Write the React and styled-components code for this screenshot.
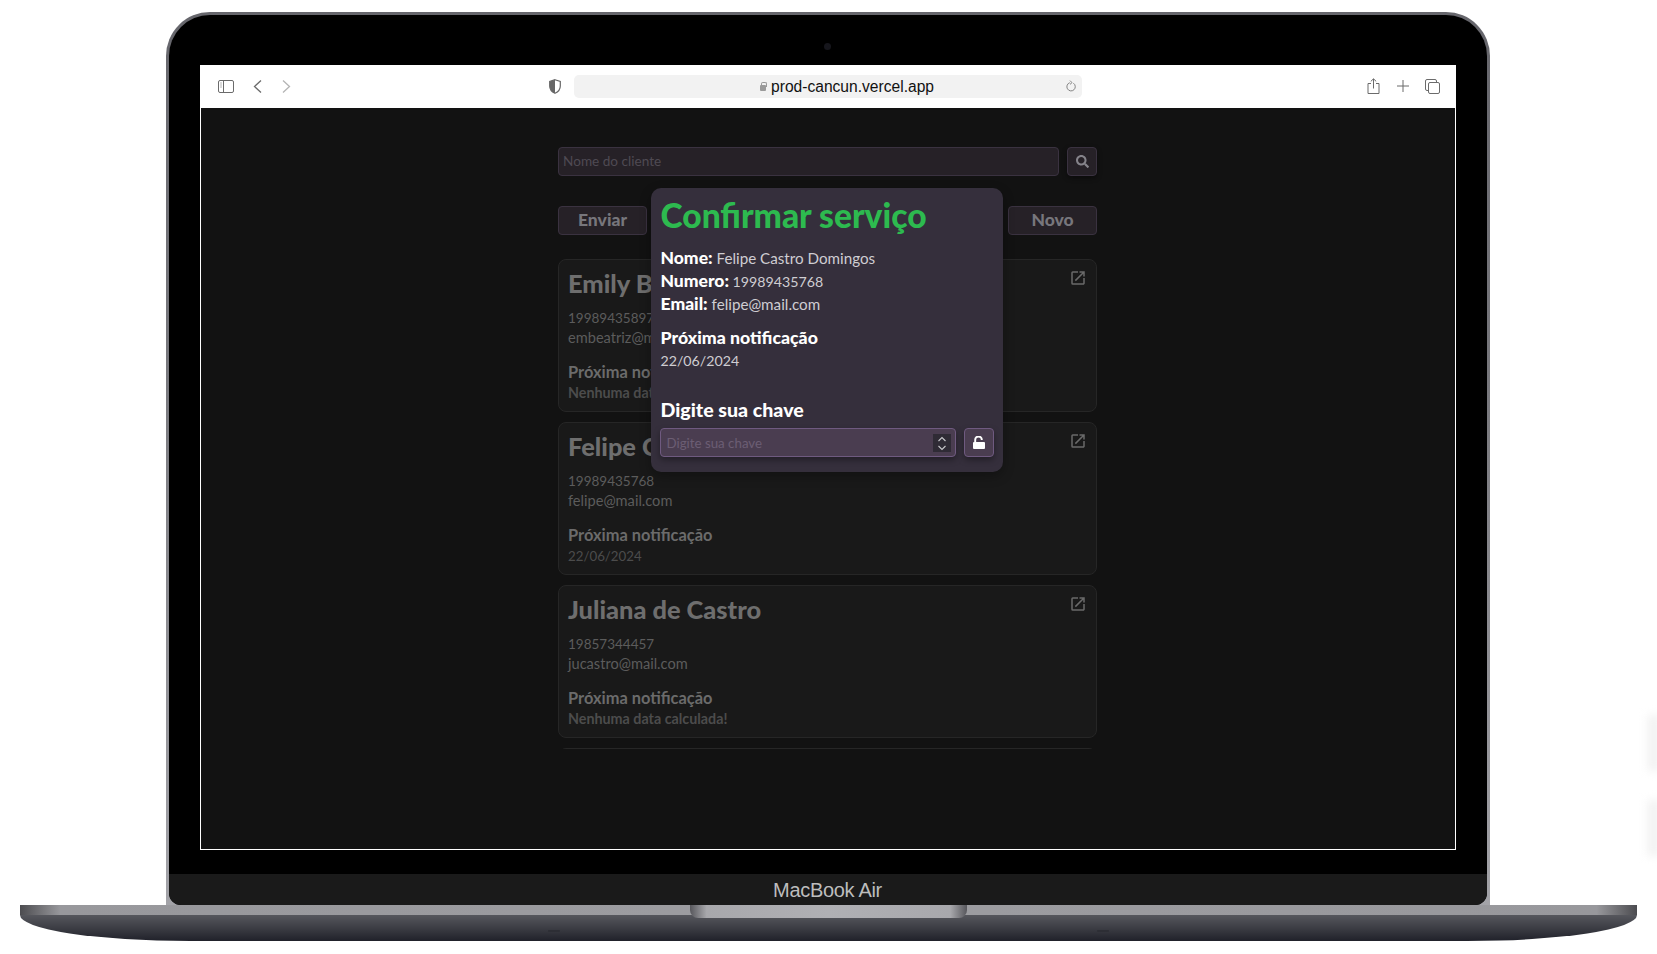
import React from "react"
import styled, { createGlobalStyle } from "styled-components"
import { FaSearch } from "react-icons/fa"
import { MdOpenInNew } from "react-icons/md"

const clients = [
  { name: "Emily Beatriz", phone: "19989435897", email: "embeatriz@mail.com", next: null },
  { name: "Felipe Castro Domingos", phone: "19989435768", email: "felipe@mail.com", next: "22/06/2024" },
  { name: "Juliana de Castro", phone: "19857344457", email: "jucastro@mail.com", next: null },
]

export default function App() {
  return (
    <Page>
      <GlobalStyle />
      <Lid>
        <Bezel>
          <Camera />
          <Screen>
            <Toolbar>
              <ToolbarLeft>
                <ToolIcon width="16" height="13" viewBox="0 0 16 13">
                  <rect x="0.5" y="0.5" width="15" height="12" rx="1.5" />
                  <path d="M5.5 0.5v12M2.5 3h1M2.5 5h1M2.5 7h1" />
                </ToolIcon>
                <ChevronGroup>
                  <ToolIcon width="9" height="13" viewBox="0 0 9 13">
                    <path d="M8 0.5 1.5 6.5 8 12.5" strokeWidth="1.3" />
                  </ToolIcon>
                  <ToolIcon faded width="9" height="13" viewBox="0 0 9 13">
                    <path d="M1 0.5 7.5 6.5 1 12.5" strokeWidth="1.3" />
                  </ToolIcon>
                </ChevronGroup>
                <ShieldWrap>
                  <svg width="12" height="15" viewBox="0 0 12 15">
                    <path d="M6 0.7 11.3 2.4V7c0 3.6-2.4 6-5.3 7.3C3.1 13 .7 10.6.7 7V2.4z" fill="none" stroke="#666" strokeWidth="1.2" />
                    <path d="M6 0.7V14.3C3.1 13 .7 10.6.7 7V2.4z" fill="#666" />
                  </svg>
                </ShieldWrap>
              </ToolbarLeft>
              <UrlBar>
                <UrlLock />
                <UrlText>prod-cancun.vercel.app</UrlText>
                <ReloadIcon width="11" height="13" viewBox="0 0 11 13">
                  <path d="M7.4 3.2a4.2 4.2 0 1 1-3.6-.5" fill="none" stroke="#777" strokeWidth="0.9" />
                  <path d="M4 0.6 6 2.6 4 4.4" fill="none" stroke="#777" strokeWidth="0.9" />
                </ReloadIcon>
              </UrlBar>
              <ToolbarRight>
                <ToolIcon width="13" height="16" viewBox="0 0 13 16">
                  <path d="M4 5.5H1v10h11v-10H9M6.5 10.5V1M3.8 3.4 6.5 .8l2.7 2.6" />
                </ToolIcon>
                <ToolIcon width="12" height="12" viewBox="0 0 12 12">
                  <path d="M6 0v12M0 6h12" />
                </ToolIcon>
                <ToolIcon width="15" height="15" viewBox="0 0 15 15">
                  <rect x="3.5" y="3.5" width="11" height="11" rx="1.5" />
                  <path d="M3.5 11.5H2A1.5 1.5 0 0 1 .5 10V2A1.5 1.5 0 0 1 2 .5h8A1.5 1.5 0 0 1 11.5 2v1.5" />
                </ToolIcon>
              </ToolbarRight>
            </Toolbar>
            <Content>
              <Column>
                <SearchRow>
                  <SearchInput placeholder="Nome do cliente" readOnly />
                  <SearchButton>
                    <FaSearch size={13} />
                  </SearchButton>
                </SearchRow>
                <Actions>
                  <ActionButton>Enviar</ActionButton>
                  <ActionButton>Novo</ActionButton>
                </Actions>
                <List>
                  {clients.map((c) => (
                    <Card key={c.name}>
                      <CardLink>
                        <MdOpenInNew size={18} />
                      </CardLink>
                      <CardName>{c.name}</CardName>
                      <CardPhone>{c.phone}</CardPhone>
                      <CardEmail>{c.email}</CardEmail>
                      <CardLabel>Próxima notificação</CardLabel>
                      <CardDate empty={!c.next}>{c.next || "Nenhuma data calculada!"}</CardDate>
                    </Card>
                  ))}
                  <Card />
                </List>
                <Modal>
                  <ModalTitle>Confirmar serviço</ModalTitle>
                  <InfoLine>
                    <strong>Nome:</strong> Felipe Castro Domingos
                  </InfoLine>
                  <InfoLine digits>
                    <strong>Numero:</strong> 19989435768
                  </InfoLine>
                  <InfoLine>
                    <strong>Email:</strong> felipe@mail.com
                  </InfoLine>
                  <ModalLabel>Próxima notificação</ModalLabel>
                  <InfoLine digits>22/06/2024</InfoLine>
                  <KeyLabel>Digite sua chave</KeyLabel>
                  <KeyRow>
                    <KeyField>
                      <KeyInput placeholder="Digite sua chave" readOnly />
                      <Spinner>
                        <svg width="10" height="15" viewBox="0 0 10 15">
                          <path d="M1.5 5 5 1.5 8.5 5M1.5 10 5 13.5 8.5 10" fill="none" stroke="#c8c8cc" strokeWidth="1.1" />
                        </svg>
                      </Spinner>
                    </KeyField>
                    <UnlockButton>
                      <svg width="12" height="13" viewBox="0 0 12 13">
                        <path d="M2.2 6.5V3.8a3.3 3.3 0 0 1 6.6 0v.2" fill="none" stroke="#fff" strokeWidth="1.9" />
                        <rect x="0" y="6" width="12" height="7" rx="1" fill="#fff" />
                      </svg>
                    </UnlockButton>
                  </KeyRow>
                </Modal>
              </Column>
            </Content>
          </Screen>
          <ModelStrip>MacBook Air</ModelStrip>
        </Bezel>
      </Lid>
      <Base>
        <BaseBand />
        <BaseBody>
          <Foot />
          <Foot />
        </BaseBody>
        <Notch />
      </Base>
      <EdgeShade />
      <EdgeShade second />
    </Page>
  )
}

const GlobalStyle = createGlobalStyle`
  html, body {
    margin: 0;
    background: #fff;
    overflow: hidden;
  }
  * {
    box-sizing: border-box;
  }
`
const Page = styled.div`
  position: relative;
  height: 954px;
  padding-top: 12px;
  display: flex;
  flex-direction: column;
  align-items: center;
  background: #fff;
  overflow: hidden;
  font-family: "Lato", "Noto Sans", sans-serif;
`
const Lid = styled.div`
  width: 1324px;
  height: 893px;
  margin-right: 2px;
  padding: 3px 3px 0;
  border-radius: 44px 44px 0 0;
  background: linear-gradient(#66666c, #77777c 40%, #a3a3a8);
  display: flex;
`
const Bezel = styled.div`
  position: relative;
  flex: 1;
  padding-top: 50px;
  border-radius: 41px 41px 12px 12px;
  background: #000;
  display: flex;
  flex-direction: column;
  align-items: center;
`
const Camera = styled.div`
  position: absolute;
  top: 28px;
  left: 655px;
  width: 7px;
  height: 7px;
  border-radius: 50%;
  background: #16161c;
`
const Screen = styled.div`
  width: 1256px;
  height: 785px;
  display: flex;
  flex-direction: column;
`
const Toolbar = styled.div`
  height: 43px;
  background: #fff;
  display: grid;
  grid-template-columns: 1fr 508px 1fr;
  align-items: center;
  padding-bottom: 1px;
`
const ToolbarLeft = styled.div`
  display: flex;
  align-items: center;
  padding: 0 13px 0 18px;
`
const ChevronGroup = styled.div`
  display: flex;
  gap: 20px;
  margin-left: 19px;
`
const ShieldWrap = styled.div`
  margin-left: auto;
  display: flex;
`
const ToolIcon = styled.svg`
  fill: none;
  stroke: ${(props) => (props.faded ? "#b4b4b4" : "#6b6b6b")};
  stroke-width: 1;
  flex: none;
`
const UrlBar = styled.div`
  position: relative;
  height: 23px;
  padding-left: 39px;
  border-radius: 5px;
  background: #f2f2f2;
  display: flex;
  align-items: center;
  justify-content: center;
  gap: 5px;
`
const UrlLock = styled.span`
  position: relative;
  width: 6px;
  height: 6px;
  margin-top: 3px;
  border-radius: 1px;
  background: #9a9a9a;
  &::before {
    content: "";
    position: absolute;
    left: 1px;
    top: -3px;
    width: 4px;
    height: 4px;
    border: 1px solid #9a9a9a;
    border-bottom: 0;
    border-radius: 2px 2px 0 0;
  }
`
const UrlText = styled.span`
  position: relative;
  top: 1px;
  font-family: "Liberation Sans", Arial, sans-serif;
  font-size: 15.6px;
  color: #111;
`
const ReloadIcon = styled.svg`
  position: absolute;
  right: 5px;
  top: 5px;
`
const ToolbarRight = styled.div`
  display: flex;
  align-items: center;
  justify-content: flex-end;
  gap: 16.5px;
  padding-right: 15.5px;
`
const Content = styled.div`
  flex: 1;
  background: #121212;
  border: 1px solid #fff;
  border-top: 0;
  display: flex;
  justify-content: center;
`
const Column = styled.div`
  position: relative;
  width: 539px;
  padding-top: 39px;
  display: flex;
  flex-direction: column;
`
const SearchRow = styled.div`
  display: flex;
  gap: 8px;
`
const SearchInput = styled.input`
  flex: 1;
  height: 29px;
  padding: 0 4px 2px;
  border: 1px solid #3a3240;
  border-radius: 4px;
  outline: none;
  background: #262127;
  font-family: inherit;
  font-size: 13.6px;
  &::placeholder {
    color: #4f4a53;
  }
`
const SearchButton = styled.div`
  width: 30px;
  height: 29px;
  border: 1px solid #3a3240;
  border-radius: 4px;
  background: #262127;
  color: #85838a;
  box-shadow: 0 2px 5px rgba(0, 0, 0, 0.4);
  display: flex;
  align-items: center;
  justify-content: center;
`
const Actions = styled.div`
  margin-top: 30px;
  display: flex;
  justify-content: space-between;
`
const ActionButton = styled.div`
  width: 89px;
  height: 29px;
  padding-bottom: 2px;
  border: 1px solid #3a3240;
  border-radius: 4px;
  background: #262127;
  color: #77767c;
  font-size: 17.5px;
  font-weight: 900;
  display: flex;
  align-items: center;
  justify-content: center;
`
const List = styled.div`
  margin-top: 24px;
  height: 490px;
  overflow: hidden;
  display: flex;
  flex-direction: column;
  gap: 10px;
`
const Card = styled.div`
  position: relative;
  flex: none;
  height: 153px;
  padding: 10px 9px;
  border: 1px solid #262626;
  border-radius: 8px;
  background: #191919;
  color: #626262;
`
const CardLink = styled.div`
  position: absolute;
  top: 9px;
  right: 9px;
  color: #6a6a6a;
  display: flex;
`
const CardName = styled.div`
  color: #6e6e6e;
  font-size: 25.4px;
  font-weight: 900;
  line-height: 26px;
`
const CardPhone = styled.div`
  margin-top: 12px;
  font-size: 13.5px;
  line-height: 20px;
  color: #5c5c5c;
`
const CardEmail = styled.div`
  font-size: 14.6px;
  line-height: 20px;
  color: #5c5c5c;
`
const CardLabel = styled.div`
  margin-top: 13px;
  font-size: 16.4px;
  font-weight: 700;
  line-height: 22px;
  color: #6b6b6b;
`
const CardDate = styled.div`
  font-size: ${(props) => (props.empty ? "14.3px" : "13.3px")};
  line-height: 20px;
  font-weight: ${(props) => (props.empty ? 700 : 400)};
  color: #4c4c4c;
`
const Modal = styled.div`
  position: absolute;
  top: 80px;
  left: 50%;
  width: 352px;
  height: 284px;
  margin-left: -1px;
  padding: 7px 9px 0 10px;
  transform: translateX(-50%);
  border-radius: 10px;
  background: #352f3c;
  box-shadow: 0 4px 12px rgba(0, 0, 0, 0.3);
`
const ModalTitle = styled.h2`
  margin: 0 0 12px;
  font-size: 33.6px;
  font-weight: 900;
  line-height: 40px;
  color: #2dba4f;
`
const InfoLine = styled.div`
  font-size: ${(props) => (props.digits ? "14.2px" : "15.2px")};
  line-height: 23px;
  color: #cfcdd2;
  strong {
    font-size: 17.5px;
    font-weight: 900;
    line-height: 1;
    color: #fff;
  }
`
const ModalLabel = styled.div`
  margin-top: 11px;
  font-size: 17.7px;
  font-weight: 900;
  line-height: 22px;
  color: #fff;
`
const KeyLabel = styled.div`
  margin-top: 26px;
  font-size: 19.6px;
  font-weight: 900;
  line-height: 24px;
  color: #fff;
`
const KeyRow = styled.div`
  margin-top: 6px;
  margin-left: -1px;
  display: flex;
  gap: 8px;
`
const KeyField = styled.div`
  position: relative;
  flex: 1;
  height: 29px;
  border: 1px solid #6f5a80;
  border-radius: 4px;
  background: #4a3d50;
  box-shadow: 0 3px 6px rgba(0, 0, 0, 0.35);
`
const KeyInput = styled.input`
  width: 100%;
  height: 100%;
  padding: 0 6px;
  border: 0;
  outline: none;
  background: transparent;
  font-family: inherit;
  font-size: 13.3px;
  &::placeholder {
    color: #6c5e74;
  }
`
const Spinner = styled.div`
  position: absolute;
  top: 5px;
  right: 4px;
  width: 18px;
  height: 18px;
  background: #2f2b35;
  display: flex;
  align-items: center;
  justify-content: center;
`
const UnlockButton = styled.div`
  width: 30px;
  height: 29px;
  border: 1px solid #6f5a80;
  border-radius: 4px;
  background: #4a3d50;
  box-shadow: 0 3px 6px rgba(0, 0, 0, 0.35);
  display: flex;
  align-items: center;
  justify-content: center;
`
const ModelStrip = styled.div`
  margin-top: auto;
  align-self: stretch;
  height: 31px;
  padding-top: 2px;
  border-radius: 0 0 12px 12px;
  background: #1a1a1a;
  color: #bdbdbd;
  font-family: "Liberation Sans", Arial, sans-serif;
  font-size: 20px;
  letter-spacing: -0.3px;
  display: flex;
  align-items: center;
  justify-content: center;
`
const Base = styled.div`
  position: relative;
  width: 1617px;
  height: 36px;
  display: flex;
  flex-direction: column;
`
const BaseBand = styled.div`
  height: 10px;
  background: linear-gradient(90deg, #4c4c50, #98989c 2.5%, #9d9da1 50%, #98989c 97.5%, #4c4c50);
`
const BaseBody = styled.div`
  flex: 1;
  padding: 15px 528px 0;
  border-radius: 0 0 170px 170px / 0 0 26px 26px;
  background: linear-gradient(#56575d, #3c3d44 50%, #20212a);
  display: flex;
  justify-content: space-between;
`
const Foot = styled.div`
  width: 12px;
  height: 2px;
  border-radius: 2px;
  background: #2d2e35;
`
const Notch = styled.div`
  position: absolute;
  top: 0;
  left: 670px;
  width: 277px;
  height: 13px;
  border-radius: 0 0 8px 8px;
  background: linear-gradient(90deg, #57575c, #a8a8ac 6%, #b0b0b4 50%, #a8a8ac 94%, #57575c);
`
const EdgeShade = styled.div`
  position: absolute;
  right: -4px;
  top: ${(props) => (props.second ? "800px" : "715px")};
  width: 14px;
  height: 56px;
  background: #f3f3f3;
  filter: blur(4px);
`
